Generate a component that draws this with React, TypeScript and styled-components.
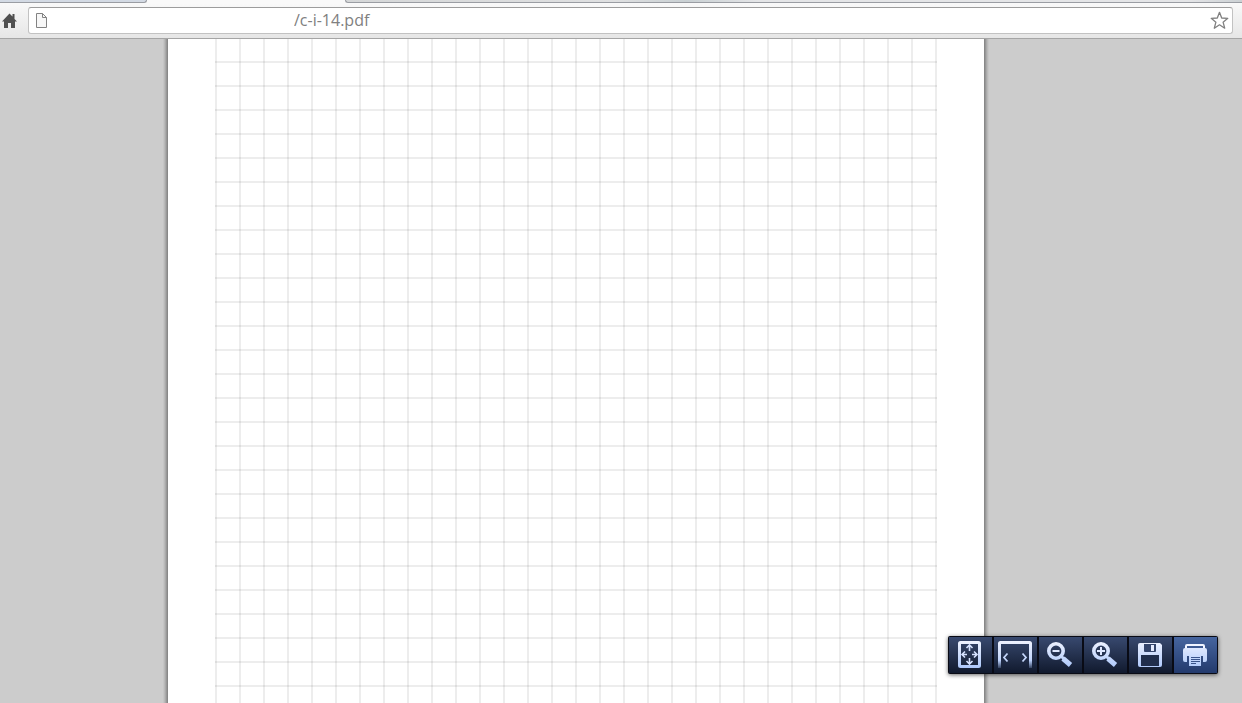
import React from "react";
import styled, { createGlobalStyle } from "styled-components";

const GlobalStyle = createGlobalStyle`
  * { box-sizing: border-box; }
  body { margin: 0; font-family: "Open Sans", "Noto Sans", sans-serif; background: #ccc; }
`;

const Window = styled.div`
  display: flex;
  flex-direction: column;
  height: 100vh;
  overflow: hidden;
`;

const TabStrip = styled.div`
  display: flex;
  flex: none;
  height: 3px;
  background: #f9f9f9;
`;

const TabEdge = styled.div<{ $side: "left" | "right" }>`
  border-bottom: 1px solid #9a9da3;
  ${({ $side }) =>
    $side === "left"
      ? "width: 147px; border-right: 1px solid #9a9da3; border-bottom-right-radius: 3px; background: #d3dae4;"
      : "flex: 1; margin-left: 198px; border-left: 1px solid #9a9da3; border-bottom-left-radius: 3px; background: linear-gradient(90deg, #d5d7d8, #dfe0e1 30%, #c9d0d3 38%, #e4e5e7 46%, #e4e5e7 94%, #ccd1d4);"}
`;

const AddressBar = styled.header`
  display: flex;
  flex: none;
  align-items: center;
  height: 36px;
  padding: 0 9px 0 0;
  background: linear-gradient(#f9f9f9, #e6e6e6);
  border-bottom: 1px solid #a5a5a5;
`;

const PlainButton = styled.button`
  display: flex;
  flex: none;
  padding: 0;
  border: 0;
  background: none;
`;

const HomeButton = styled(PlainButton)`
  width: 28px;
  padding-left: 2px;
`;

const UrlField = styled.div`
  display: flex;
  flex: 1;
  align-items: center;
  height: 27px;
  padding: 0 3px 0 6px;
  background: #fff;
  border: 1px solid #c2c2c2;
  border-top-color: #9c9c9c;
  border-radius: 3px;
`;

const UrlInput = styled.input`
  flex: 1;
  min-width: 0;
  height: 25px;
  padding: 0 0 2px 246px;
  border: 0;
  outline: 0;
  background: transparent;
  color: #808080;
  font: 16px/22px "Open Sans", "Noto Sans", sans-serif;
`;

const Viewer = styled.main`
  display: flex;
  flex: 1;
  justify-content: center;
  min-height: 0;
  padding-right: 90px;
  overflow: hidden;
  background: #ccc;
`;

const Sheet = styled.section`
  display: flex;
  width: 816px;
  padding: 0 47px;
  background: #fff;
  box-shadow:
    0 0 0 1px rgba(0, 0, 0, 0.1),
    0 0 0 2px rgba(0, 0, 0, 0.1),
    0 0 0 3px rgba(0, 0, 0, 0.08),
    0 0 0 4px rgba(0, 0, 0, 0.06),
    0 0 0 5px rgba(0, 0, 0, 0.03);
`;

const GraphPaper = styled.div`
  flex: 1;
  background-image:
    linear-gradient(90deg, rgba(0, 0, 0, 0.07) 2px, transparent 2px),
    linear-gradient(rgba(0, 0, 0, 0.07) 2px, transparent 2px);
  background-size: 24px 24px;
  background-position: 0 22px;
`;

const PdfToolbar = styled.nav`
  position: fixed;
  right: 24px;
  bottom: 29px;
  display: flex;
  gap: 2px;
  padding: 1px;
  background: #090b15;
  border-radius: 2px;
  box-shadow: 0 1px 4px rgba(0, 0, 0, 0.6);
`;

const ToolButton = styled.button<{ $active?: boolean }>`
  display: flex;
  align-items: center;
  justify-content: center;
  width: 43px;
  height: 36px;
  padding: 0 2px 0 0;
  border: 0;
  background: ${({ $active }) =>
    $active ? "linear-gradient(#46659f, #233a6d)" : "linear-gradient(#38496f, #111a2e)"};
`;

const Ice = () => (
  <defs>
    <linearGradient id="ice" gradientUnits="userSpaceOnUse" x1="0" y1="2" x2="0" y2="30">
      <stop offset="0" stopColor="#f1f4ff" />
      <stop offset="1" stopColor="#adc8fb" />
    </linearGradient>
    <linearGradient id="fade" gradientUnits="userSpaceOnUse" x1="0" y1="2" x2="0" y2="31">
      <stop offset="0" stopColor="#f1f4ff" />
      <stop offset="0.7" stopColor="#bfd3fb" />
      <stop offset="1" stopColor="#adc8fb" stopOpacity="0.1" />
    </linearGradient>
  </defs>
);

const Magnifier = ({ plus }: { plus?: boolean }) => (
  <>
    <circle cx="12" cy="13" r="7.200" fill="none" stroke="url(#ice)" strokeWidth="3.600" />
    <path d="M17 18l3 3" stroke="url(#ice)" strokeWidth="3" />
    <path d="M19 20.500l7.500 6.500" stroke="url(#ice)" strokeWidth="5" />
    <path d={plus ? "M8 13h8M12 9v8" : "M8.500 13h7"} stroke="#dfe8ff" strokeWidth="2" />
  </>
);

const tools = [
  {
    label: "Fit to page",
    icon: (
      <>
        <rect x="5.500" y="4.500" width="20" height="24" rx="1" fill="none" stroke="url(#ice)" strokeWidth="3" />
        <path
          d="M15.500 13V7M12.500 10l3-3 3 3M15.500 20v6M12.500 23l3 3 3-3M13 16.500H8.500M11 13.500l-3 3 3 3M18 16.500h4.500M20 13.500l3 3-3 3"
          fill="none" stroke="#d6e2ff" strokeWidth="1.600"
        />
      </>
    ),
  },
  {
    label: "Fit to width",
    icon: (
      <>
        <path d="M0.500 30V5.500q0-1 1-1h29q1 0 1 1V30" fill="none" stroke="url(#fade)" strokeWidth="3" />
        <path d="M8.500 15.500L5 19.500l3.500 4M23.500 15.500l3.500 4-3.500 4" fill="none" stroke="#c4d6fb" strokeWidth="1.800" />
      </>
    ),
  },
  { label: "Zoom out", icon: <Magnifier /> },
  { label: "Zoom in", icon: <Magnifier plus /> },
  {
    label: "Save",
    icon: (
      <>
        <path d="M6 5h20l2 2v20q0 2-2 2H6q-2 0-2-2V7q0-2 2-2z" fill="url(#ice)" />
        <path d="M7 17h18v11H7z" fill="#202e4d" />
        <path d="M10 6h12v7q0 1-1 1H11q-1 0-1-1z" fill="#33446b" />
        <path d="M17 7h3v6h-3z" fill="#e4ebff" />
      </>
    ),
  },
  {
    label: "Print",
    active: true,
    icon: (
      <>
        <path d="M7 10V8q0-1 1-1h16q1 0 1 1v2" fill="none" stroke="#f0f4ff" strokeWidth="2" />
        <path d="M6 10h20q2 0 2 2v10q0 2-2 2h-2v-6H8v6H6q-2 0-2-2V12q0-2 2-2z" fill="url(#ice)" />
        <path d="M10 17h12v11H10z" fill="url(#ice)" />
        <path d="M12 19.500h9M12 21.500h9M12 23.500h9M12 25.500h5" stroke="#38538b" strokeWidth="1" />
      </>
    ),
  },
];

export default function App() {
  return (
    <Window>
      <GlobalStyle />
      <TabStrip>
        <TabEdge $side="left" />
        <TabEdge $side="right" />
      </TabStrip>
      <AddressBar>
        <HomeButton aria-label="Home">
          <svg width="15" height="16" viewBox="0 0 15 16">
            <path d="M7.500 0.500L0 8.500h2V15h4v-5h3v5h4V8.500h2L12.500 6V1h-2v2.500z" fill="#505050" />
          </svg>
        </HomeButton>
        <UrlField>
          <svg width="13" height="17" viewBox="0 0 13 17">
            <path d="M1.500 1.500h6l4 4v10h-10z" fill="#f7f7f7" stroke="#828282" />
            <path d="M7.500 1.500v4h4" fill="none" stroke="#828282" />
          </svg>
          <UrlInput aria-label="Address" defaultValue="/c-i-14.pdf" />
          <PlainButton aria-label="Bookmark this page">
            <svg width="19" height="19" viewBox="0 0 19 19">
              <path
                d="M9.500 1.300l2.200 5.700 6.100.3-4.700 3.900 1.600 6-5.200-3.400-5.200 3.400 1.600-6L1.200 7.300 7.300 7z"
                fill="#fff" stroke="#808080" strokeWidth="1.300" strokeLinejoin="round"
              />
            </svg>
          </PlainButton>
        </UrlField>
      </AddressBar>
      <Viewer>
        <Sheet>
          <GraphPaper />
        </Sheet>
      </Viewer>
      <PdfToolbar aria-label="Document tools">
        {tools.map((tool) => (
          <ToolButton key={tool.label} aria-label={tool.label} $active={tool.active}>
            <svg width="34" height="32" viewBox="-1 1 34 32">
              <Ice />
              {tool.icon}
            </svg>
          </ToolButton>
        ))}
      </PdfToolbar>
    </Window>
  );
}
